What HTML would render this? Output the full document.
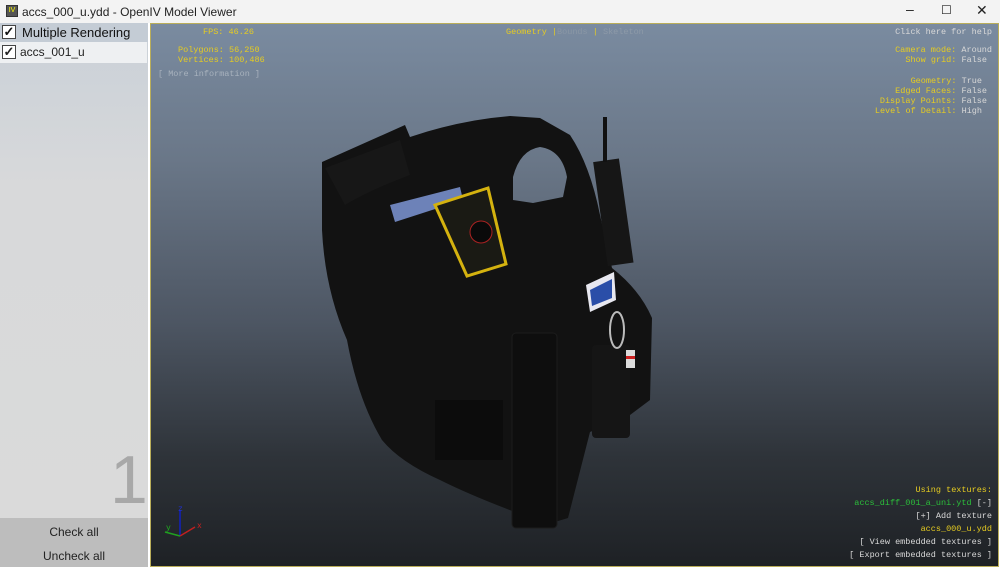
<!DOCTYPE html>
<html><head><style>
*{margin:0;padding:0;box-sizing:border-box}
body{width:1000px;height:567px;overflow:hidden;background:#fff;font-family:"Liberation Sans",sans-serif;position:relative}
.title{position:absolute;left:0;top:0;width:1000px;height:23px;background:#f3f3f3;font-size:12px;color:#222}
.title .t{position:absolute;left:22px;top:5px}
.ico{position:absolute;left:6px;top:5px;width:12px;height:12px;background:#555;border:1px solid #333;color:#ff0;font-size:7px;text-align:center;line-height:10px}
.wb{position:absolute;top:2px;font-size:14px;color:#222}
.left{position:absolute;left:0;top:23px;width:148px;height:544px;background:linear-gradient(#c9d0d8,#d8d9da 30%,#dadada)}
.hdr{position:absolute;left:0;top:0;width:148px;height:19px;background:#c4ccd5;font-size:13px;color:#111}
.item{position:absolute;left:0;top:19px;width:147px;height:21px;background:#eef0f2;font-size:13px;color:#222}
.cb{position:absolute;left:2px;width:14px;height:14px;border:1px solid #444;background:#fff;font-size:13px;line-height:12px;text-align:center;font-weight:bold}
.big{position:absolute;left:110px;top:418px;font-size:68px;color:#a8a8a8;font-weight:300}
.btns{position:absolute;left:0;top:495px;width:148px;height:49px;background:#bdbdbd;font-size:12px;color:#222;text-align:center}
.vp{position:absolute;left:150px;top:23px;width:849px;height:544px;border:1px solid #b9ad5a;background:linear-gradient(#7a8ba0 0%,#6a7788 25%,#4d5663 55%,#2e3339 80%,#1e2125 100%);font-family:"Liberation Mono",monospace;font-size:8.5px}
.y{color:#e6cc21}.w{color:#d8d8d8}.g{color:#2bbf3a}.d{color:#a8b2bd}
.vp div{position:absolute;white-space:pre}
</style></head><body>
<div class="title"><div class="ico">IV</div><div class="t">accs_000_u.ydd - OpenIV Model Viewer</div>
<div class="wb" style="left:906px;top:1px">–</div><div class="wb" style="left:941px;font-size:12px;top:3px">☐</div><div class="wb" style="left:976px">✕</div></div>
<div class="left">
<div class="hdr"><div class="cb" style="top:2px">✓</div><span style="position:absolute;left:22px;top:2px">Multiple Rendering</span></div>
<div class="item"><div class="cb" style="top:3px">✓</div><span style="position:absolute;left:20px;top:3px;font-size:12px">accs_001_u</span></div>
<div class="big">1</div>
<div class="btns"><div style="position:absolute;top:7px;width:148px">Check all</div><div style="position:absolute;top:31px;width:148px">Uncheck all</div></div>
</div>
<div class="vp">
<div class="y" style="left:52px;top:3px">FPS: 46.26</div>
<div class="y" style="left:27px;top:21px">Polygons: 56,250</div>
<div class="y" style="left:27px;top:31px">Vertices: 100,486</div>
<div class="d" style="left:7px;top:45px">[ More information ]</div>
<div style="left:355px;top:3px"><span class="y">Geometry</span> <span class="y">|</span><span style="color:#8a97a5">Bounds</span> <span class="y">|</span> <span style="color:#8d9aa8">Skeleton</span></div>
<div class="w" style="right:6px;top:3px">Click here for help</div>
<div style="right:6px;top:21px"><span class="y">Camera mode:</span> <span class="w">Around</span></div>
<div style="right:11px;top:31px"><span class="y">Show grid:</span> <span class="w">False</span></div>
<div style="right:16px;top:52px"><span class="y">Geometry:</span> <span class="w">True</span></div>
<div style="right:11px;top:62px"><span class="y">Edged Faces:</span> <span class="w">False</span></div>
<div style="right:11px;top:72px"><span class="y">Display Points:</span> <span class="w">False</span></div>
<div style="right:16px;top:82px"><span class="y">Level of Detail:</span> <span class="w">High</span></div>
<div class="y" style="right:6px;top:461px">Using textures:</div>
<div style="right:6px;top:474px"><span class="g">accs_diff_001_a_uni.ytd</span> <span class="w">[-]</span></div>
<div class="w" style="right:6px;top:487px">[+] Add texture</div>
<div class="y" style="right:6px;top:500px">accs_000_u.ydd</div>
<div class="w" style="right:6px;top:513px">[ View embedded textures ]</div>
<div class="w" style="right:6px;top:526px">[ Export embedded textures ]</div>
</div>
<svg style="position:absolute;left:0;top:0" width="1000" height="567">
<path d="M322 162 L405 125 L410 137 Q460 120 510 116 L540 118 L570 135 Q590 165 600 215 L612 268 Q640 290 652 318 L650 400 L630 415 L590 432 L568 518 L535 528 L515 512 Q470 495 440 480 Q400 462 382 440 Q358 400 347 340 Q325 290 322 230 Z M513 177 Q520 150 540 147 Q562 150 567 177 L563 197 L533 203 L513 200 Z" fill="#121212" fill-rule="evenodd"/>
<path d="M325 168 L400 140 L410 175 Q370 190 345 205 Z" fill="#171717"/>
<path d="M390 205 L460 187 L463 200 L395 222 Z" fill="#6d82b8"/>
<path d="M435 205 L488 188 L506 264 L467 276 Z" fill="#1a1a14" stroke="#d4b20f" stroke-width="3"/>
<circle cx="481" cy="232" r="11" fill="#0a0a0a" stroke="#a22" stroke-width="1"/>
<rect x="600" y="160" width="26" height="105" fill="#161616" transform="rotate(-8 612 210)"/>
<rect x="603" y="117" width="4" height="45" fill="#111"/>
<path d="M586 285 L614 272 L616 300 L590 312 Z" fill="#e8e8f0"/>
<path d="M590 290 L612 279 L612 298 L592 306 Z" fill="#2a4ea8"/>
<rect x="512" y="333" width="45" height="195" rx="4" fill="#0e0e0e" stroke="#1c1c1c"/>
<rect x="435" y="400" width="68" height="60" fill="#0c0c0c"/>
<rect x="592" y="345" width="38" height="93" rx="4" fill="#151515"/>
<rect x="626" y="350" width="9" height="18" fill="#ddd"/><rect x="626" y="356" width="9" height="3" fill="#c22"/>
<ellipse cx="617" cy="330" rx="7" ry="18" fill="none" stroke="#bbb" stroke-width="2"/>
<line x1="180" y1="536" x2="180" y2="510" stroke="#1020c0" stroke-width="1.5"/>
<line x1="180" y1="536" x2="195" y2="527" stroke="#c02020" stroke-width="1.5"/>
<line x1="180" y1="536" x2="165" y2="532" stroke="#20a020" stroke-width="1.5"/>
<text x="178" y="511" font-size="8" fill="#2030d0" font-family="Liberation Mono">z</text>
<text x="197" y="528" font-size="8" fill="#d02020" font-family="Liberation Mono">x</text>
<text x="166" y="530" font-size="8" fill="#20b020" font-family="Liberation Mono">y</text>
</svg>
</body></html>
